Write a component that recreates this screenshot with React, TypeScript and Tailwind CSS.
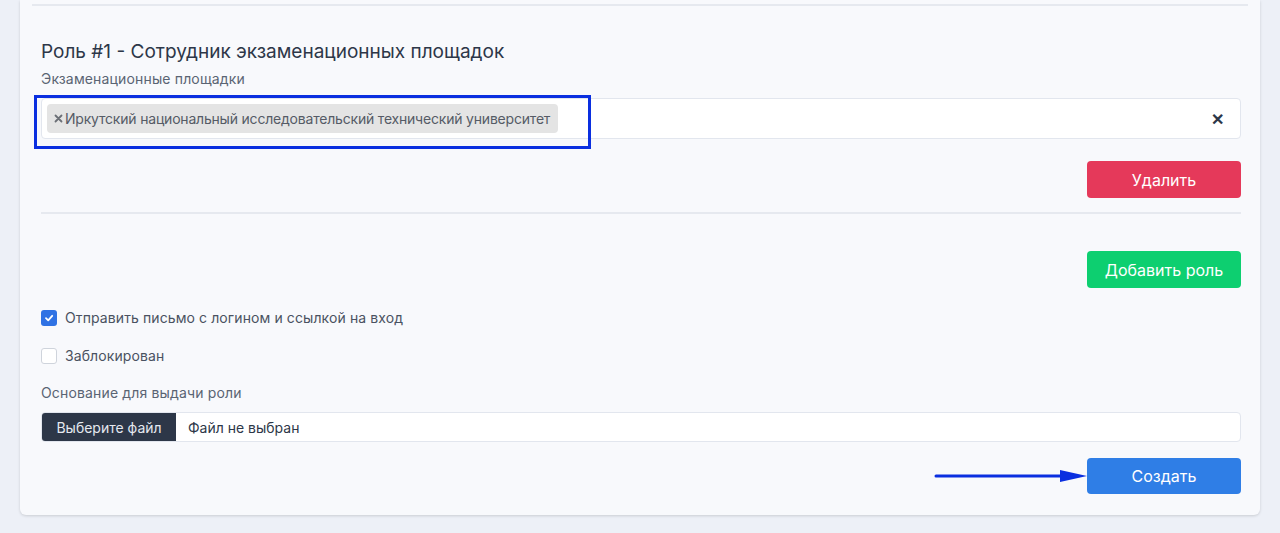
import React from "react";

export default function App() {
  return (
    <div className="min-h-[533px] w-full bg-[#edf0f7]" style={{ fontFamily: "Inter, 'Noto Sans', sans-serif" }}>
      <div className="mx-[20px] rounded-b-[6px] bg-[#f8f9fc] shadow-[0_1px_3px_rgba(0,0,0,0.15)] pb-[21px]">
        <div className="pt-[4px] mx-[12px]">
          <div className="h-[2px] bg-[#e6e9ef]" />
        </div>
        <div className="pl-[21px] pr-[19px]">
          <h2 className="mt-[34px] text-[19px] leading-[24px] text-[#2d3748]">
            Роль #1 - Сотрудник экзаменационных площадок
          </h2>
          <div className="mt-[6px] text-[14px] leading-[18px] tracking-[0.15px] text-[#5a6473]">
            Экзаменационные площадки
          </div>
          <div className="relative mt-[10px] flex h-[41px] items-center rounded-[4px] border border-[#e2e6ee] bg-white pl-[5px] pr-[16px]">
            <div className="flex h-[29px] items-center rounded-[4px] bg-[#e4e4e4] pl-[7px] pr-[8px] text-[14px] tracking-[-0.2px] text-[#555b66]">
              <svg className="mr-[2px]" width="9" height="9" viewBox="0 0 9 9">
                <path d="M1.5 1.5 L7.5 7.5 M7.5 1.5 L1.5 7.5" stroke="#6b6f76" strokeWidth="1.8" strokeLinecap="round" />
              </svg>
              Иркутский национальный исследовательский технический университет
            </div>
            <div className="ml-auto text-[16px] font-bold text-[#2d3748]">✕</div>
            <div className="pointer-events-none absolute left-[-8px] top-[-4px] h-[54px] w-[557px] border-[3px] border-[#0a2fe0]" />
          </div>
          <div className="mt-[22px] flex justify-end">
            <button className="h-[37px] w-[154px] rounded-[4px] bg-[#e5395a] text-[16px] text-white">
              Удалить
            </button>
          </div>
          <div className="mt-[14px] h-[2px] bg-[#e6e9ef]" />
          <div className="mt-[37px] flex justify-end">
            <button className="h-[37px] w-[154px] rounded-[4px] bg-[#0dcf70] text-[16px] text-white">
              Добавить роль
            </button>
          </div>
          <label className="mt-[21px] flex items-center gap-[8px]">
            <span className="flex h-[16px] w-[16px] items-center justify-center rounded-[3px] bg-[#2f72e4]">
              <svg width="10" height="10" viewBox="0 0 10 10">
                <path d="M2 5.2 L4.2 7.3 L8.2 2.8" fill="none" stroke="white" strokeWidth="1.8" strokeLinecap="round" strokeLinejoin="round" />
              </svg>
            </span>
            <span className="text-[14px] leading-[18px] tracking-[0.1px] text-[#4a5261]">
              Отправить письмо с логином и ссылкой на вход
            </span>
          </label>
          <label className="mt-[20px] flex items-center gap-[8px]">
            <span className="h-[16px] w-[16px] rounded-[3px] border border-[#cfd4dc] bg-white" />
            <span className="text-[14px] leading-[18px] tracking-[0.1px] text-[#4a5261]">
              Заблокирован
            </span>
          </label>
          <div className="mt-[19px] text-[14px] leading-[18px] tracking-[0.15px] text-[#5a6473]">
            Основание для выдачи роли
          </div>
          <div className="mt-[10px] flex h-[30px] items-center overflow-hidden rounded-[4px] border border-[#e2e6ee] bg-white">
            <div className="flex h-full w-[134px] items-center justify-center bg-[#2d3748] text-[14px] text-[#e5e9f0]">
              Выберите файл
            </div>
            <div className="ml-[12px] text-[14px] text-[#2d3748]">Файл не выбран</div>
          </div>
          <div className="relative mt-[16px] flex justify-end">
            <svg className="absolute left-[893px] top-[10px]" width="154" height="16" viewBox="0 0 154 16">
              <line x1="2" y1="8" x2="130" y2="8" stroke="#0a2fe0" strokeWidth="3" strokeLinecap="round" />
              <path d="M126 2 L153 8 L126 14 Z" fill="#0a2fe0" />
            </svg>
            <button className="h-[36px] w-[154px] rounded-[4px] bg-[#2f7ee6] text-[16px] text-white">
              Создать
            </button>
          </div>
        </div>
      </div>
    </div>
  );
}
